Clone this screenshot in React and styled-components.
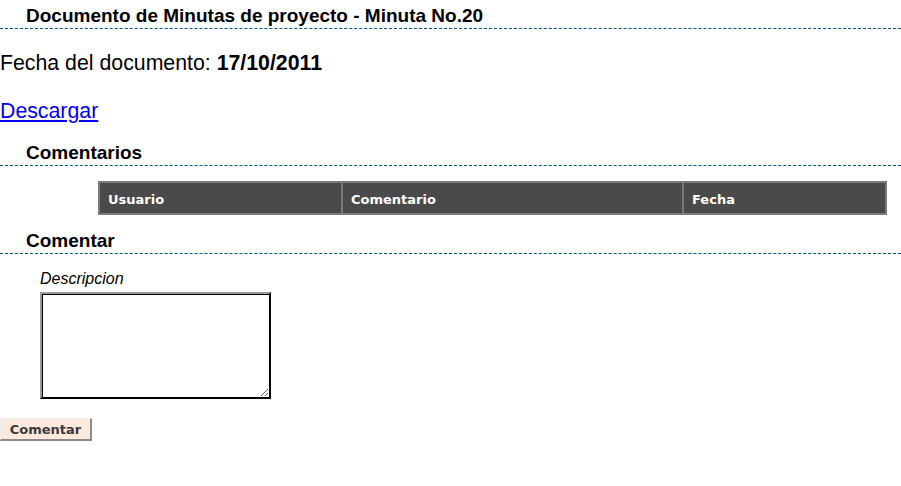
import styled, { createGlobalStyle } from "styled-components";

const Global = createGlobalStyle`
  body {
    margin: 0;
    background: #fff;
    font-family: "Liberation Sans", Arial, sans-serif;
    color: #000;
  }
`;

const Page = styled.div`
  width: 901px;
  padding-top: 7px;
`;

const Heading = styled.h3`
  margin: ${(p) => p.$top || 0}px 0 0;
  padding: 0 0 3px 26px;
  font-size: 19px;
  line-height: 18px;
  font-weight: bold;
  border-bottom: 1px dashed #005580;
`;

const Para = styled.p`
  margin: ${(p) => p.$top}px 0 0;
  font-size: 21.3px;
  line-height: 24px;
`;

const Link = styled.a`
  color: #0000ee;
  text-decoration: underline;
`;

const Table = styled.table`
  margin: 15px 0 0 98px;
  width: 787px;
  table-layout: fixed;
  border-collapse: collapse;
  border: 2px solid #7a7a7a;
`;

const Th = styled.th`
  box-sizing: border-box;
  width: ${(p) => p.$w}px;
  background: #4a4a4a;
  color: #fff;
  border: 2px solid #7a7a7a;
  padding: 8px 8px 5px;
  text-align: left;
  font-family: "DejaVu Sans", Verdana, sans-serif;
  font-size: 13px;
  line-height: 17px;
  font-weight: bold;
`;

const Form = styled.form`
  padding: 16px 0 0 40px;
`;

const Label = styled.label`
  display: block;
  font-style: italic;
  font-size: 16px;
  line-height: 18px;
`;

const TextArea = styled.textarea`
  display: block;
  box-sizing: border-box;
  width: 231px;
  height: 107px;
  margin-top: 4px;
  padding: 2px;
  border-style: solid;
  border-width: 2px;
  border-color: #999 #000 #000 #999;
  box-shadow: inset 1px 1px 0 #000;
  resize: both;
  font-family: "Liberation Mono", monospace;
  outline: none;
`;

const Button = styled.button`
  display: block;
  margin-top: 19px;
  width: 92px;
  height: 23px;
  padding: 0;
  background: #fce9dc;
  border-style: solid;
  border-width: 1px 2px 2px 1px;
  border-color: #eee #8a8a8a #8a8a8a #eee;
  color: #3a3a3a;
  font-family: "DejaVu Sans", Verdana, sans-serif;
  font-size: 13px;
  font-weight: bold;
`;

export default function App() {
  return (
    <Page>
      <Global />
      <Heading>Documento de Minutas de proyecto - Minuta No.20</Heading>
      <Para $top={22}>
        Fecha del documento: <b>17/10/2011</b>
      </Para>
      <Para $top={24}>
        <Link href="#">Descargar</Link>
      </Para>
      <Heading $top={21}>Comentarios</Heading>
      <Table>
        <thead>
          <tr>
            <Th $w={243}>Usuario</Th>
            <Th $w={341}>Comentario</Th>
            <Th $w={203}>Fecha</Th>
          </tr>
        </thead>
      </Table>
      <Heading $top={17}>Comentar</Heading>
      <Form>
        <Label>Descripcion</Label>
        <TextArea />
      </Form>
      <Button>Comentar</Button>
    </Page>
  );
}
